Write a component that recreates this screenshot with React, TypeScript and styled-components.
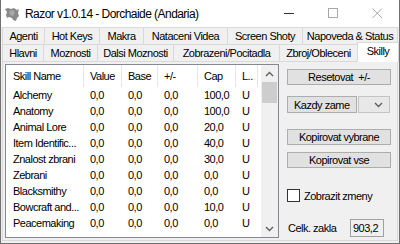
import React from "react"
import styled, { createGlobalStyle } from "styled-components"

const GlobalStyle = createGlobalStyle`
  html, body {
    margin: 0;
    padding: 0;
    background: #f0f0f0;
  }
  body {
    font-family: "Liberation Sans", Arial, sans-serif;
    font-size: 11px;
    letter-spacing: -0.5px;
    color: #000;
  }
`

const Window = styled.div`
  width: 400px;
  height: 244px;
  box-sizing: border-box;
  display: flex;
  flex-direction: column;
  background: #f0f0f0;
  border-left: 1px solid #707070;
  border-right: 1px solid #707070;
  border-bottom: 1px solid #707070;
  overflow: hidden;
`

const TitleBar = styled.div`
  height: 27px;
  flex: none;
  display: flex;
  align-items: center;
  background: #fff;
`

const Title = styled.span`
  margin-left: 5px;
  font-size: 12px;
  letter-spacing: -0.55px;
  color: #000;
`

const CaptionButtons = styled.div`
  margin-left: auto;
  display: flex;
  height: 100%;
`

const CaptionButton = styled.div`
  width: 44px;
  height: 100%;
  display: flex;
  align-items: center;
  justify-content: center;
`

const TabStrip = styled.div`
  flex: none;
  display: flex;
  flex-direction: column;
  padding: 0 1px;
`

const TabRow = styled.div`
  height: 17px;
  display: flex;
`

const Tab = styled.div<{ $w: number; $active?: boolean }>`
  width: ${(p) => p.$w}px;
  box-sizing: border-box;
  height: ${(p) => (p.$active ? 20 : 18)}px;
  margin-top: ${(p) => (p.$active ? -2 : 0)}px;
  margin-right: -1px;
  border: 1px solid #d9d9d9;
  border-bottom: ${(p) => (p.$active ? "none" : "1px solid #d9d9d9")};
  background: ${(p) => (p.$active ? "#fff" : "#f0f0f0")};
  position: relative;
  z-index: ${(p) => (p.$active ? 2 : 1)};
  display: flex;
  align-items: ${(p) => (p.$active ? "flex-start" : "center")};
  padding-top: ${(p) => (p.$active ? 2 : 0)}px;
  justify-content: center;
  white-space: nowrap;
`

const TabPage = styled.div`
  flex: 1;
  margin: 0 1px 2px 1px;
  border: 1px solid #d9d9d9;
  background: #f0f0f0;
  display: flex;
  padding: 2px 0 0 2px;
  min-height: 0;
`

const ListView = styled.div`
  width: 274px;
  height: 174px;
  box-sizing: border-box;
  border: 1px solid #828790;
  background: #fff;
  display: flex;
  flex: none;
`

const Table = styled.div`
  flex: 1;
  display: flex;
  flex-direction: column;
  overflow: hidden;
`

const HeaderRow = styled.div`
  height: 22px;
  display: flex;
  align-items: center;
`

const Row = styled.div`
  height: 16px;
  display: flex;
  align-items: center;
`

const Cell = styled.div<{ $w: number; $head?: boolean; $pad?: number }>`
  width: ${(p) => p.$w}px;
  flex: none;
  box-sizing: border-box;
  height: 100%;
  display: flex;
  align-items: center;
  padding-left: ${(p) => p.$pad ?? 6}px;
  white-space: nowrap;
  overflow: hidden;
  border-right: ${(p) => (p.$head ? "1px solid #e5e5e5" : "none")};
`

const ScrollBar = styled.div`
  width: 17px;
  flex: none;
  background: #f0f0f0;
  display: flex;
  flex-direction: column;
`

const ScrollArrow = styled.div`
  height: 17px;
  display: flex;
  align-items: center;
  justify-content: center;
`

const Thumb = styled.div`
  height: 21px;
  margin: 0 1px;
  background: #cdcdcd;
`

const Side = styled.div`
  margin-left: 8px;
  width: 104px;
  display: flex;
  flex-direction: column;
`

const Button = styled.div<{ $mt: number }>`
  margin-top: ${(p) => p.$mt}px;
  height: 16px;
  box-sizing: border-box;
  border: 1px solid #adadad;
  background: #e1e1e1;
  display: flex;
  align-items: center;
  justify-content: center;
  white-space: nowrap;
`

const ComboRow = styled.div<{ $mt: number }>`
  margin-top: ${(p) => p.$mt}px;
  height: 17px;
  display: flex;
  gap: 1px;
`

const ComboLabel = styled.div`
  width: 70px;
  box-sizing: border-box;
  border: 1px solid #adadad;
  background: #e1e1e1;
  display: flex;
  align-items: center;
  padding-left: 6px;
  white-space: nowrap;
`

const ComboDrop = styled.div`
  width: 32px;
  box-sizing: border-box;
  border: 1px solid #c4c4c4;
  background: #e8e8e8;
  display: flex;
  align-items: center;
  justify-content: flex-end;
  padding-right: 6px;
`

const CheckRow = styled.div<{ $mt: number }>`
  margin-top: ${(p) => p.$mt}px;
  height: 13px;
  display: flex;
  align-items: center;
  gap: 4px;
`

const CheckBox = styled.div`
  width: 13px;
  height: 13px;
  box-sizing: border-box;
  border: 1px solid #333;
  background: #fff;
`

const TotalRow = styled.div<{ $mt: number }>`
  margin-top: ${(p) => p.$mt}px;
  height: 18px;
  display: flex;
  align-items: center;
  padding-left: 1px;
`

const TotalBox = styled.div`
  margin-left: auto;
  margin-right: 7px;
  width: 34px;
  height: 18px;
  box-sizing: border-box;
  border: 1px solid #a0a0a0;
  background: #f0f0f0;
  display: flex;
  align-items: center;
  padding-left: 2px;
`

const cols = [
  { name: "Skill Name", w: 78, pad: 7 },
  { name: "Value", w: 38 },
  { name: "Base", w: 36 },
  { name: "+/-", w: 40 },
  { name: "Cap", w: 38 },
  { name: "L..", w: 22 },
]

const skills: [string, string][] = [
  ["Alchemy", "100,0"],
  ["Anatomy", "100,0"],
  ["Animal Lore", "20,0"],
  ["Item Identific...", "40,0"],
  ["Znalost zbrani", "30,0"],
  ["Zebrani", "0,0"],
  ["Blacksmithy", "0,0"],
  ["Bowcraft and...", "10,0"],
  ["Peacemaking", "0,0"],
]

const topTabs: [string, number][] = [
  ["Agenti", 43],
  ["Hot Keys", 56],
  ["Makra", 45],
  ["Nataceni Videa", 85],
  ["Screen Shoty", 76],
  ["Napoveda & Status", 96],
]

const bottomTabs: [string, number][] = [
  ["Hlavni", 42],
  ["Moznosti", 55],
  ["Dalsi Moznosti", 77],
  ["Zobrazeni/Pocitadla", 107],
  ["Zbroj/Obleceni", 79],
]

const Chevron = ({ up }: { up?: boolean }) => (
  <svg width="9" height="6" viewBox="0 0 9 6">
    <path
      d={up ? "M1 5 L4.5 1.5 L8 5" : "M1 1 L4.5 4.5 L8 1"}
      fill="none"
      stroke="#606060"
      strokeWidth="1.4"
    />
  </svg>
)

const AppIcon = () => (
  <svg width="16" height="16" viewBox="0 0 16 16" style={{ marginLeft: 3 }}>
    <path
      d="M1 3 L4 2 L7 3 L10 2 L13 4 L15 3 L14 7 L15 10 L13 12 L12 15 L9 14 L8 12 L5 11 L3 12 L2 9 L3 6 Z"
      fill="#8a8a8a"
    />
    <path d="M5 5 L9 4 L11 7 L9 10 L6 9 Z" fill="#a8a8a8" />
  </svg>
)

const App = () => (
  <>
    <GlobalStyle />
    <Window>
      <TitleBar>
        <AppIcon />
        <Title>Razor v1.0.14 - Dorchaide (Andaria)</Title>
        <CaptionButtons>
          <CaptionButton>
            <svg width="11" height="11" viewBox="0 0 11 11">
              <path d="M0 5.5 H10" stroke="#333" strokeWidth="1" />
            </svg>
          </CaptionButton>
          <CaptionButton>
            <svg width="11" height="11" viewBox="0 0 11 11">
              <rect x="0.5" y="0.5" width="9" height="9" fill="none" stroke="#a8a8a8" />
            </svg>
          </CaptionButton>
          <CaptionButton>
            <svg width="11" height="11" viewBox="0 0 11 11">
              <path d="M0.5 0.5 L10 10 M10 0.5 L0.5 10" stroke="#a8a8a8" strokeWidth="1" />
            </svg>
          </CaptionButton>
        </CaptionButtons>
      </TitleBar>
      <TabStrip>
        <TabRow>
          {topTabs.map(([t, w]) => (
            <Tab key={t} $w={w}>
              {t}
            </Tab>
          ))}
        </TabRow>
        <TabRow>
          {bottomTabs.map(([t, w]) => (
            <Tab key={t} $w={w}>
              {t}
            </Tab>
          ))}
          <Tab $w={42} $active>
            Skilly
          </Tab>
        </TabRow>
      </TabStrip>
      <TabPage>
        <ListView>
          <Table>
            <HeaderRow>
              {cols.map((c) => (
                <Cell key={c.name} $w={c.w} $pad={c.pad} $head>
                  {c.name}
                </Cell>
              ))}
            </HeaderRow>
            {skills.map(([name, cap]) => (
              <Row key={name}>
                <Cell $w={78} $pad={7}>{name}</Cell>
                <Cell $w={38}>0,0</Cell>
                <Cell $w={36}>0,0</Cell>
                <Cell $w={40}>0,0</Cell>
                <Cell $w={38}>{cap}</Cell>
                <Cell $w={22}>U</Cell>
              </Row>
            ))}
          </Table>
          <ScrollBar>
            <ScrollArrow>
              <Chevron up />
            </ScrollArrow>
            <Thumb />
            <div style={{ flex: 1 }} />
            <ScrollArrow>
              <Chevron />
            </ScrollArrow>
          </ScrollBar>
        </ListView>
        <Side>
          <Button $mt={5}>Resetovat&nbsp; +/-</Button>
          <ComboRow $mt={11}>
            <ComboLabel>Kazdy zame</ComboLabel>
            <ComboDrop>
              <Chevron />
            </ComboDrop>
          </ComboRow>
          <Button $mt={16}>Kopirovat vybrane</Button>
          <Button $mt={7}>Kopirovat vse</Button>
          <CheckRow $mt={21}>
            <CheckBox />
            Zobrazit zmeny
          </CheckRow>
          <TotalRow $mt={17}>
            Celk. zakla
            <TotalBox>903,2</TotalBox>
          </TotalRow>
        </Side>
      </TabPage>
    </Window>
  </>
)

export default App
